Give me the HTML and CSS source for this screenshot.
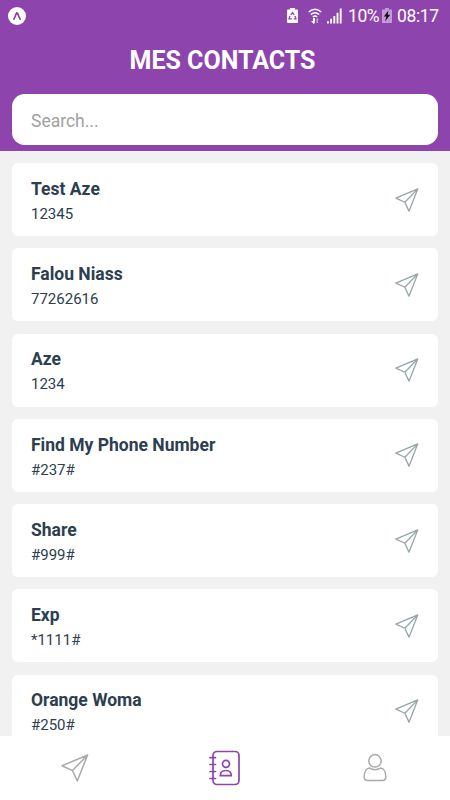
FILE: index.html
```
<!DOCTYPE html>
<html lang="fr">
<head>
<meta charset="utf-8">
<title>Mes contacts</title>
<link rel="stylesheet" href="styles.css">
</head>
<body>
<svg width="0" height="0" class="defs"><defs>
<symbol id="plane" viewBox="0 0 28 28"><path d="M1 11.8 26.6 1 16.3 27 11.5 16.6ZM11.5 16.6 26.6 1"/></symbol>
</defs></svg>
<div class="app">
<header class="header">
<div class="status">
<svg class="expo" viewBox="0 0 18 18"><circle cx="9" cy="9" r="9" fill="#fff"/><path d="M5.8 12.2C7 10.6 7.8 7.2 8.5 6.2q.5-.6 1 0c.7 1 1.5 4.4 2.7 6" fill="none" stroke="#7d4299" stroke-width="1.6" stroke-linecap="round"/></svg>
<div class="indicators">
<svg class="saver" viewBox="0 0 11 15"><path d="M3 0h5v1.5h2q1 0 1 1V14q0 1-1 1H1q-1 0-1-1V2.5q0-1 1-1h2Z" fill="#fff"/><path d="M3.8 6.8 5.5 4.5l1.7 2.3M8 8l1 2.8H6.7M4.8 10.8H2L3 8" fill="none" stroke="#8e44ad" stroke-width="1.3"/></svg>
<svg class="wifi" viewBox="0 0 14 16"><path d="M.7 4Q7-1.5 13.3 4M2.8 6.5Q7 3 11.2 6.5M4.8 8.8Q7 7 9.2 8.8" fill="none" stroke="#fff" stroke-width="1.5"/><path d="M5 10v3H3l2.7 3 1.3-1.5V10Z" fill="#fff"/><path d="M8.5 15v-3H7.8l1.5-2 1.5 2H10v3Z" fill="#c9a6d9"/></svg>
<svg class="signal" viewBox="0 0 16 16"><path d="M0 13.5h2V16H0zM3.4 11h2v5h-2zM6.8 8h2v8h-2zM10.2 4.5h2V16h-2zM13.6 0h2v16h-2z" fill="#fff"/></svg>
<span class="percent">10%</span>
<svg class="battery" viewBox="0 0 10 15"><path d="M3 0h4v1.5h3V15H0V1.5h3Z" fill="#c19bd2"/><path d="M6.5 2.5 1.8 8.5h2.5L3 13.5l5.2-6.7H5.7Z" fill="#170b20"/></svg>
<span class="time">08:17</span>
</div>
</div>
<h1>MES CONTACTS</h1>
<input class="search" type="text" placeholder="Search..." aria-label="Search">
</header>
<main class="list">
<article class="card"><div><h2>Test Aze</h2><p>12345</p></div><svg class="send"><use href="#plane"/></svg></article>
<article class="card"><div><h2>Falou Niass</h2><p>77262616</p></div><svg class="send"><use href="#plane"/></svg></article>
<article class="card"><div><h2>Aze</h2><p>1234</p></div><svg class="send"><use href="#plane"/></svg></article>
<article class="card"><div><h2>Find My Phone Number</h2><p>#237#</p></div><svg class="send"><use href="#plane"/></svg></article>
<article class="card"><div><h2>Share</h2><p>#999#</p></div><svg class="send"><use href="#plane"/></svg></article>
<article class="card"><div><h2>Exp</h2><p>*1111#</p></div><svg class="send"><use href="#plane"/></svg></article>
<article class="card"><div><h2>Orange Woma</h2><p>#250#</p></div><svg class="send"><use href="#plane"/></svg></article>
</main>
<nav class="tabs">
<a class="tab"><svg class="tab-plane"><use href="#plane"/></svg></a>
<a class="tab active"><svg class="tab-book" viewBox="0 0 32 36"><rect x="4" y="1.5" width="26" height="33" rx="4"/><path d="M1 7.7h5.5M1 14.5h5.5M1 21.5h5.5M1 28.5h5.5M11.3 25.7h11q0-5.2-5.5-5.2t-5.5 5.2Z"/><circle cx="17" cy="13.8" r="3.5"/></svg></a>
<a class="tab"><svg class="tab-user" viewBox="0 0 24 30"><circle cx="12" cy="7.8" r="6.2"/><path d="M6.5 15.1Q12 18.3 17.5 15.1C21 15.5 22.8 19.5 22.8 23.5q0 4-3.3 4h-15q-3.3 0-3.3-4C1.2 19.5 3 15.5 6.5 15.1Z"/></svg></a>
</nav>
</div>
</body>
</html>
```

FILE: styles.css
```
* { box-sizing: border-box; margin: 0; padding: 0; }
body { font-family: Roboto, "Liberation Sans", sans-serif; background: #f1f1f1; overflow: hidden; }
.defs { position: absolute; }
.app { height: 800px; display: flex; flex-direction: column; }
.header { height: 150.5px; flex: none; background: #8e44ad; padding: 0 12.4px; color: #fff; }
.status { height: 31px; margin: 0 -4.5px; display: flex; align-items: center; justify-content: space-between; }
.expo { width: 18px; height: 18px; }
.indicators { display: flex; align-items: center; margin-right: 3px; font-size: 18px; line-height: 31px; }
.saver { width: 11px; height: 15px; margin-right: 10px; }
.wifi { width: 14px; height: 16px; margin-right: 5px; }
.signal { width: 15px; height: 16px; margin-right: 6px; }
.percent { width: 34px; white-space: nowrap; font-size: 17.5px; letter-spacing: -0.5px; padding-top: 1px; }
.battery { width: 10px; height: 15px; margin-right: 5px; }
.time { width: 42px; white-space: nowrap; font-size: 17.5px; letter-spacing: -0.4px; padding-top: 1px; }
h1 { height: 63.4px; padding-top: 15px; text-align: center; font-size: 25px; line-height: 30px; font-weight: 700; margin-right: 5px; }
.search { display: block; width: 100%; height: 50.4px; border: 0; border-radius: 12.5px; background: #fff; padding: 2.4px 18.6px 0; font: 17.5px Roboto, "Liberation Sans", sans-serif; outline: 0; }
.search::placeholder { color: #a1a1a1; opacity: 1; }
.list { flex: 1; min-height: 0; overflow: hidden; padding: 12.5px 12.4px 0; display: flex; flex-direction: column; gap: 12.3px; }
.card { flex: none; height: 73px; background: #fff; border-radius: 6px; padding: 0 18.6px; display: flex; align-items: center; justify-content: space-between; color: #2c3e50; }
.card > div { padding-top: 2.4px; }
h2 { font-size: 17.5px; line-height: 26px; font-weight: 700; }
p { font-size: 15px; line-height: 24px; }
.send { width: 24px; height: 24px; fill: none; stroke: #95a5a6; stroke-width: 1.5; stroke-linejoin: round; }
.tabs { height: 64px; flex: none; background: #fff; display: flex; }
.tab { flex: 1; display: flex; align-items: center; justify-content: center; fill: none; stroke: #aaa; stroke-width: 1.5; stroke-linejoin: round; stroke-linecap: round; }
.active { stroke: #8e44ad; stroke-width: 1.7; }
.tab-plane { width: 28px; height: 28px; }
.tab-book { width: 32px; height: 36px; }
.tab-user { width: 24px; height: 30px; }
```
